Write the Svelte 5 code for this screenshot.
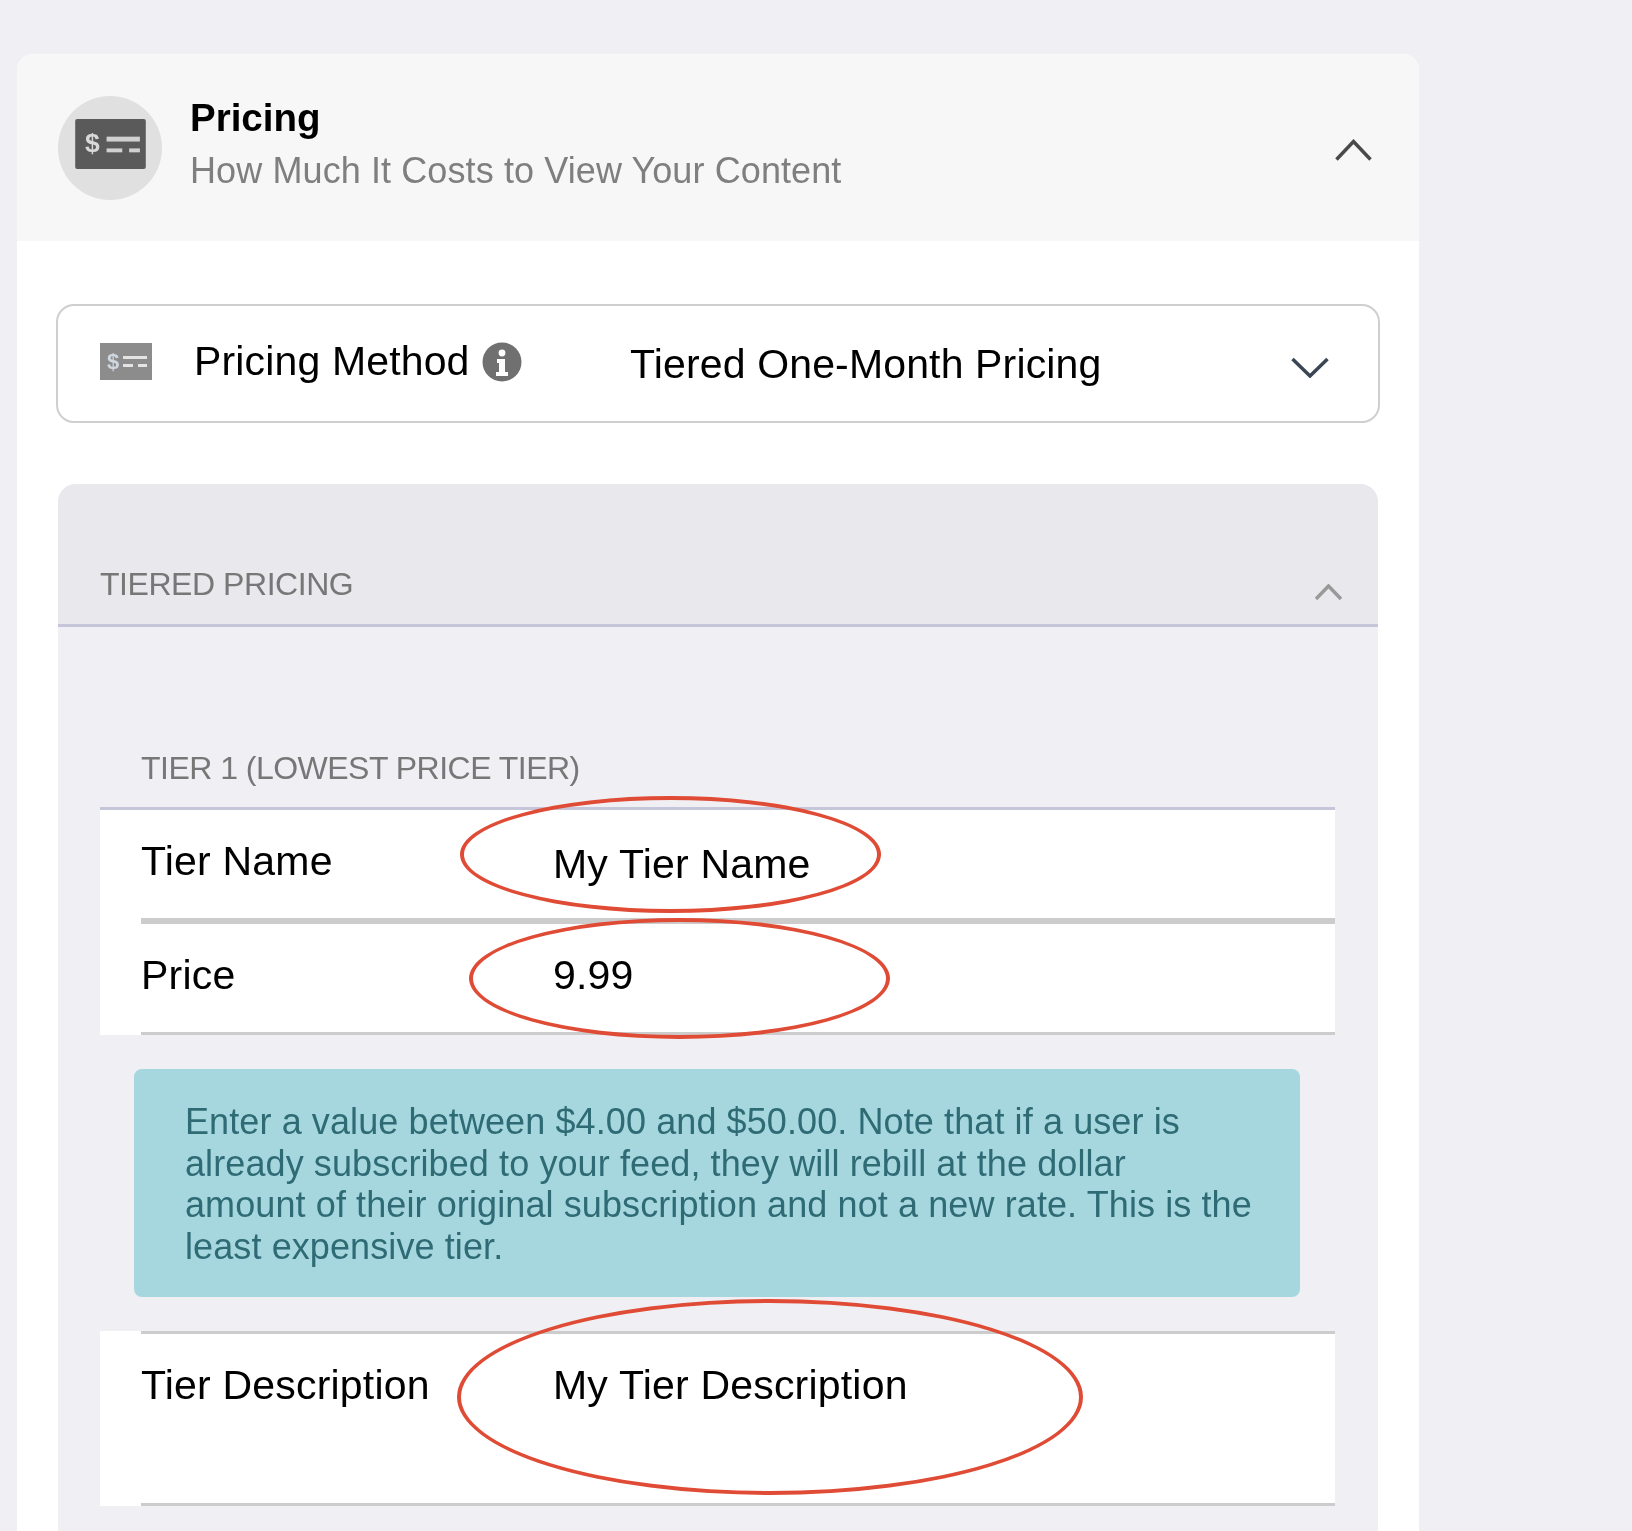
<script>
  let tierName = "My Tier Name";
  let price = "9.99";
  let tierDescription = "My Tier Description";
</script>

<div class="page">
  <section class="card">
    <header class="card-head">
      <div class="circle">
        <svg class="bill" viewBox="0 0 72 51">
          <rect width="72" height="51" rx="2" fill="#5a5a5a" />
          <text x="10" y="34" class="dollar">$</text>
          <rect x="32" y="18" width="34" height="5" fill="#d0d0d0" />
          <rect x="32" y="30" width="16" height="4" fill="#d0d0d0" />
          <rect x="55" y="30" width="11" height="4" fill="#d0d0d0" />
        </svg>
      </div>
      <div class="head-text">
        <h2>Pricing</h2>
        <p>How Much It Costs to View Your Content</p>
      </div>
      <svg class="chev-main" viewBox="0 0 37 22">
        <path d="M1.5 20.5 18.5 2.5 35.5 20.5" />
      </svg>
    </header>

    <div class="card-body">
      <div class="select">
        <div class="select-label">
          <svg class="bill-small" viewBox="0 0 52 37">
            <rect width="52" height="37" fill="#8c8c8c" />
            <text x="7" y="26" class="dollar-small">$</text>
            <rect x="23" y="13" width="24" height="3" fill="#e4e4e4" />
            <rect x="23" y="21" width="10" height="3" fill="#e4e4e4" />
            <rect x="38" y="21" width="9" height="3" fill="#e4e4e4" />
          </svg>
          <span>Pricing Method</span>
          <svg class="info" viewBox="0 0 40 40">
            <circle cx="20" cy="20" r="19.5" fill="#707070" />
            <circle cx="20" cy="11" r="3.4" fill="#fff" />
            <path d="M15 17h8v13h3v4H14v-4h3v-9h-2z" fill="#fff" />
          </svg>
        </div>
        <span class="select-value">Tiered One-Month Pricing</span>
        <svg class="chev-down" viewBox="0 0 38 21">
          <path d="M1.5 2 19 19 36.5 2" />
        </svg>
      </div>

      <div class="panel">
        <div class="panel-head">
          <span>TIERED PRICING</span>
          <svg class="chev-small" viewBox="0 0 27 16">
            <path d="M1 15 13.5 2 26 15" />
          </svg>
        </div>

        <div class="tier">
          <div class="tier-title">TIER 1 (LOWEST PRICE TIER)</div>

          <div class="row first">
            <div class="row-inner thick">
              <span class="label">Tier Name</span>
              <span class="value shifted">{tierName}</span>
            </div>
          </div>
          <div class="row">
            <div class="row-inner">
              <span class="label">Price</span>
              <span class="value">{price}</span>
            </div>
          </div>

          <div class="alert">
            Enter a value between $4.00 and $50.00. Note that if a user is already subscribed to your feed, they will rebill at the dollar amount of their original subscription and not a new rate. This is the least expensive tier.
          </div>

          <div class="row desc">
            <div class="row-inner">
              <span class="label">Tier Description</span>
              <span class="value">{tierDescription}</span>
            </div>
          </div>

          <!-- hand drawn markers over the fields -->
          <div class="mark mark-name"></div>
          <div class="mark mark-price"></div>
          <div class="mark mark-desc"></div>
        </div>
      </div>
    </div>
  </section>
</div>

<style>
:global(body) {
  margin: 0;
  background: #efeff4;
}

.page {
  height: 1531px;
  overflow: hidden;
  box-sizing: border-box;
  padding: 54px 0 0 17px;
  font-family: "Liberation Sans", Arial, sans-serif;
  color: #000;
  filter: blur(0.6px);
}

.card {
  width: 1402px;
  height: 1477px;
  background: #fff;
  border-radius: 16px 16px 0 0;
  overflow: hidden;
}

.card-head {
  height: 187px;
  background: #f7f7f8;
  display: flex;
  align-items: center;
  padding: 0 47px 0 41px;
}

.circle {
  width: 104px;
  height: 104px;
  border-radius: 50%;
  background: #e0e0e0;
  display: flex;
  align-items: center;
  justify-content: center;
  margin-right: 28px;
}

.bill {
  width: 73px;
  height: 50px;
  margin: 0 0 7px 1px;
}

.dollar {
  font: bold 27px "Liberation Sans", sans-serif;
  fill: #d8d8d8;
}

.dollar-small {
  font: bold 22px "Liberation Sans", sans-serif;
  fill: #cfd8e0;
}

.head-text {
  flex: 1;
  margin-bottom: 7px;
}

h2 {
  margin: 0 0 3px;
  font-size: 38.5px;
  line-height: 50px;
  font-weight: bold;
}

.head-text p {
  margin: 0;
  font-size: 36px;
  line-height: 50px;
  letter-spacing: 0.1px;
  color: #7f7f7f;
}

.chev-main {
  width: 37px;
  height: 22px;
  margin-top: 4px;
}

.chev-main path,
.chev-down path,
.chev-small path {
  fill: none;
  stroke-width: 3.5;
}

.chev-main path {
  stroke: #4a4a4a;
}

.chev-down path {
  stroke: #3a4654;
}

.chev-small path {
  stroke: #999;
}

.card-body {
  padding: 63px 40px 0;
}

.select {
  box-sizing: border-box;
  height: 119px;
  border: 2.5px solid #cfcfcf;
  border-radius: 18px;
  display: flex;
  align-items: center;
  padding: 0 49px 0 42px;
  margin: 0 -1px 61px;
  font-size: 41px;
  letter-spacing: 0.15px;
}

.select-label {
  width: 530px;
  flex: none;
  display: flex;
  align-items: center;
  margin-bottom: 4px;
}

.bill-small {
  width: 52px;
  height: 37px;
  margin-right: 42px;
}

.info {
  width: 40px;
  height: 40px;
  margin-left: 12px;
}

.select-value {
  flex: 1;
  padding-top: 1px;
}

.chev-down {
  width: 38px;
  height: 21px;
  margin-top: 8px;
}

.panel {
  background: #efeff4;
  border-radius: 18px 18px 0 0;
  margin: 0 1px;
  padding-bottom: 200px;
}

.panel-head {
  box-sizing: border-box;
  height: 143px;
  background: #e8e8ed;
  border-bottom: 3px solid #c6c6da;
  border-radius: 18px 18px 0 0;
  display: flex;
  align-items: flex-end;
  justify-content: space-between;
  padding: 0 36px 20px 42px;
  font-size: 32px;
  line-height: 40px;
  letter-spacing: -0.45px;
  color: #777;
}

.chev-small {
  width: 27px;
  height: 16px;
  margin-bottom: 4px;
}

.tier {
  position: relative;
  padding: 0 43px 0 42px;
}

.tier-title {
  box-sizing: border-box;
  height: 183px;
  padding: 121px 0 0 41px;
  border-bottom: 3px solid #c6c6da;
  font-size: 32px;
  line-height: 40px;
  letter-spacing: -0.52px;
  color: #777;
}

.row {
  background: #fff;
  padding-left: 41px;
}

.row-inner {
  box-sizing: border-box;
  height: 111px;
  display: grid;
  grid-template-columns: 412px 1fr;
  padding-top: 30px;
  border-bottom: 3px solid #cccccc;
  font-size: 41px;
  line-height: 42px;
  letter-spacing: 0.2px;
}

.first .row-inner {
  height: 114px;
}

.row-inner.thick {
  border-bottom-width: 6px;
}

.shifted {
  padding-top: 3px;
}

.alert {
  box-sizing: border-box;
  height: 228px;
  margin: 34px 35px 34px 34px;
  padding: 32px 45px 0 51px;
  background: #a6d7de;
  border-radius: 8px;
  font-size: 36px;
  line-height: 41.6px;
  letter-spacing: 0.1px;
  color: #2f6b75;
}

.desc .row-inner {
  height: 175px;
  padding-top: 30px;
  border-top: 3px solid #cccccc;
}

.mark {
  position: absolute;
  box-sizing: border-box;
  border: 4px solid #e04b35;
  border-radius: 50%;
}

.mark-name {
  left: 402px;
  top: 169px;
  width: 421px;
  height: 117px;
}

.mark-price {
  left: 411px;
  top: 291px;
  width: 421px;
  height: 121px;
}

.mark-desc {
  left: 399px;
  top: 672px;
  width: 626px;
  height: 196px;
}
</style>
